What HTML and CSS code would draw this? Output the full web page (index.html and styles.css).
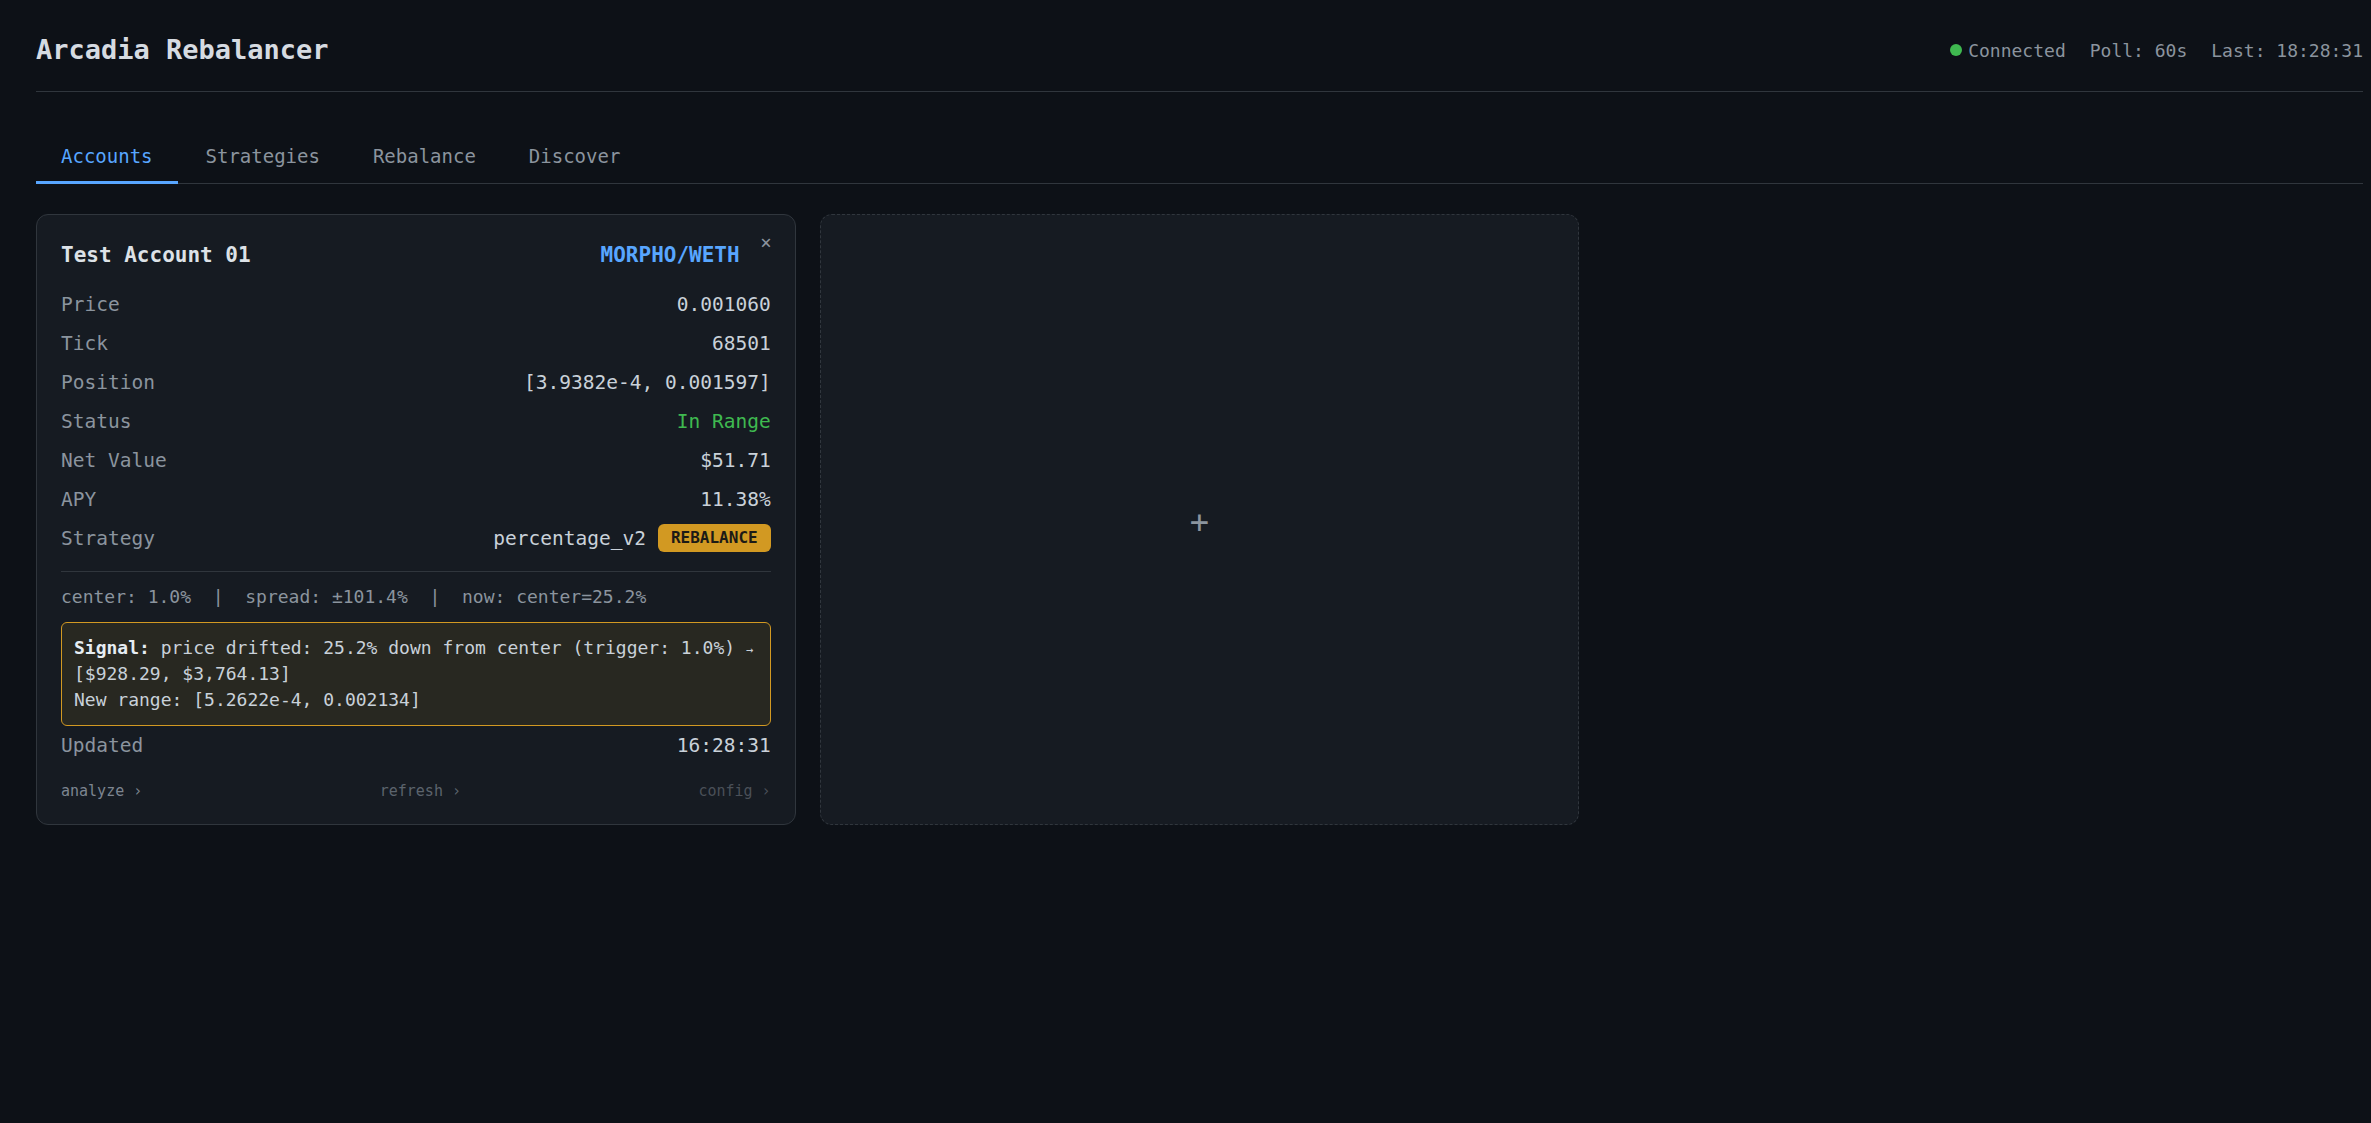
FILE: index.html
```html
<!DOCTYPE html>
<html lang="en">
<head>
    <meta charset="UTF-8">
    <meta name="viewport" content="width=device-width, initial-scale=1.0">
    <title>Arcadia Rebalancer</title>
    <link rel="stylesheet" href="styles.css">
</head>
<body>
<div class="app">
    <header class="topbar">
        <h1>Arcadia Rebalancer</h1>
        <div class="status">
            <span class="conn"><span class="dot"></span>Connected</span>
            <span>Poll: 60s</span>
            <span>Last: 18:28:31</span>
        </div>
    </header>

    <nav class="tabs">
        <a class="tab active">Accounts</a>
        <a class="tab">Strategies</a>
        <a class="tab">Rebalance</a>
        <a class="tab">Discover</a>
    </nav>

    <div class="cards">
        <div class="card">
            <span class="close">×</span>
            <div class="card-head">
                <span class="name">Test Account 01</span>
                <span class="pair">MORPHO/WETH</span>
            </div>
            <div class="row"><span class="label">Price</span><span class="val">0.001060</span></div>
            <div class="row"><span class="label">Tick</span><span class="val">68501</span></div>
            <div class="row"><span class="label">Position</span><span class="val">[3.9382e-4, 0.001597]</span></div>
            <div class="row"><span class="label">Status</span><span class="val green">In Range</span></div>
            <div class="row"><span class="label">Net Value</span><span class="val">$51.71</span></div>
            <div class="row"><span class="label">APY</span><span class="val">11.38%</span></div>
            <div class="row">
                <span class="label">Strategy</span>
                <span class="val strat">percentage_v2 <span class="badge">REBALANCE</span></span>
            </div>
            <div class="params">center: 1.0%<span class="sep">  |  </span>spread: ±101.4%<span class="sep">  |  </span>now: center=25.2%</div>
            <div class="signal">
                <b>Signal:</b> price drifted: 25.2% down from center (trigger: 1.0%) <span class="arrow">→</span> [$928.29, $3,764.13]<br>
                New range: [5.2622e-4, 0.002134]
            </div>
            <div class="row"><span class="label">Updated</span><span class="val">16:28:31</span></div>
            <div class="card-foot">
                <a class="act">analyze ›</a>
                <a class="act dim">refresh ›</a>
                <a class="act dimmer">config ›</a>
            </div>
        </div>

        <div class="card add">
            <span class="plus">+</span>
        </div>
    </div>
</div>
</body>
</html>
```

FILE: styles.css
```css
body {
    margin: 0;
    background-color: #0d1117;
    color: #c9d1d9;
    font-family: "DejaVu Sans Mono", monospace;
}

.app {
    padding: 34px 8px 0 36px;
}

.topbar {
    display: flex;
    justify-content: space-between;
    align-items: center;
    padding-bottom: 25px;
    border-bottom: 1px solid #30363d;
}

.topbar h1 {
    margin: 0;
    font-size: 27px;
    line-height: 32px;
    color: #d6dbe1;
}

.status {
    display: flex;
    gap: 24px;
    font-size: 18px;
    color: #8b949e;
}

.conn {
    display: flex;
    align-items: center;
    gap: 6px;
}

.dot {
    width: 12px;
    height: 12px;
    border-radius: 50%;
    background-color: #3fb950;
}

.tabs {
    display: flex;
    gap: 3px;
    margin-top: 40px;
    border-bottom: 1px solid #30363d;
}

.tab {
    padding: 10px 25px;
    font-size: 19px;
    line-height: 28.5px;
    color: #8b949e;
    border-bottom: 3px solid transparent;
    margin-bottom: -1px;
    cursor: pointer;
}

.tab.active {
    color: #58a6ff;
    border-bottom-color: #58a6ff;
}

.cards {
    display: grid;
    grid-template-columns: repeat(3, 1fr);
    gap: 24px;
    margin-top: 30px;
}

.card {
    position: relative;
    background-color: #161b22;
    border: 1px solid #30363d;
    border-radius: 12px;
    padding: 24px;
}

.close {
    position: absolute;
    top: 17px;
    right: 23px;
    font-size: 19px;
    line-height: 20px;
    color: #8b949e;
    cursor: pointer;
}

.card-head {
    display: flex;
    justify-content: space-between;
    align-items: center;
    padding-right: 31px;
    margin-bottom: 14px;
    font-size: 21px;
    line-height: 32px;
    font-weight: bold;
}

.name {
    color: #dde2e7;
}

.pair {
    color: #58a6ff;
}

.row {
    display: flex;
    justify-content: space-between;
    align-items: center;
    padding: 5px 0;
    font-size: 19.5px;
    line-height: 29px;
}

.label {
    color: #8b949e;
}

.val {
    color: #c9d1d9;
}

.green {
    color: #3fb950;
}

.strat {
    display: flex;
    align-items: center;
    gap: 12px;
}

.badge {
    background-color: #d29922;
    color: #1c1a16;
    font-size: 16px;
    font-weight: bold;
    line-height: 28px;
    padding: 0 13px;
    border-radius: 6px;
}

.params {
    margin-top: 13px;
    padding-top: 11px;
    border-top: 1px solid #30363d;
    font-size: 18px;
    line-height: 27px;
    color: #8b949e;
}

.sep {
    white-space: pre;
}

.signal {
    margin-top: 12px;
    padding: 12px;
    border: 1px solid #d29922;
    border-radius: 6px;
    background-color: rgba(210, 153, 34, 0.1);
    font-size: 18px;
    line-height: 26px;
    color: #c9d1d9;
}

.signal b {
    color: #e6edf3;
}

.arrow {
    font-size: 12px;
    line-height: 0;
}

.card-foot {
    display: flex;
    justify-content: space-between;
    margin-top: 17.5px;
    font-size: 15px;
    line-height: 18px;
}

.act {
    color: #7d8590;
    cursor: pointer;
}

.act.dim {
    color: #5c646d;
}

.act.dimmer {
    color: #4a5058;
}

.card.add {
    display: flex;
    justify-content: center;
    align-items: center;
    border-style: dashed;
    cursor: pointer;
}

.plus {
    margin-top: 6px;
    font-size: 32px;
    color: #8b949e;
}
```
